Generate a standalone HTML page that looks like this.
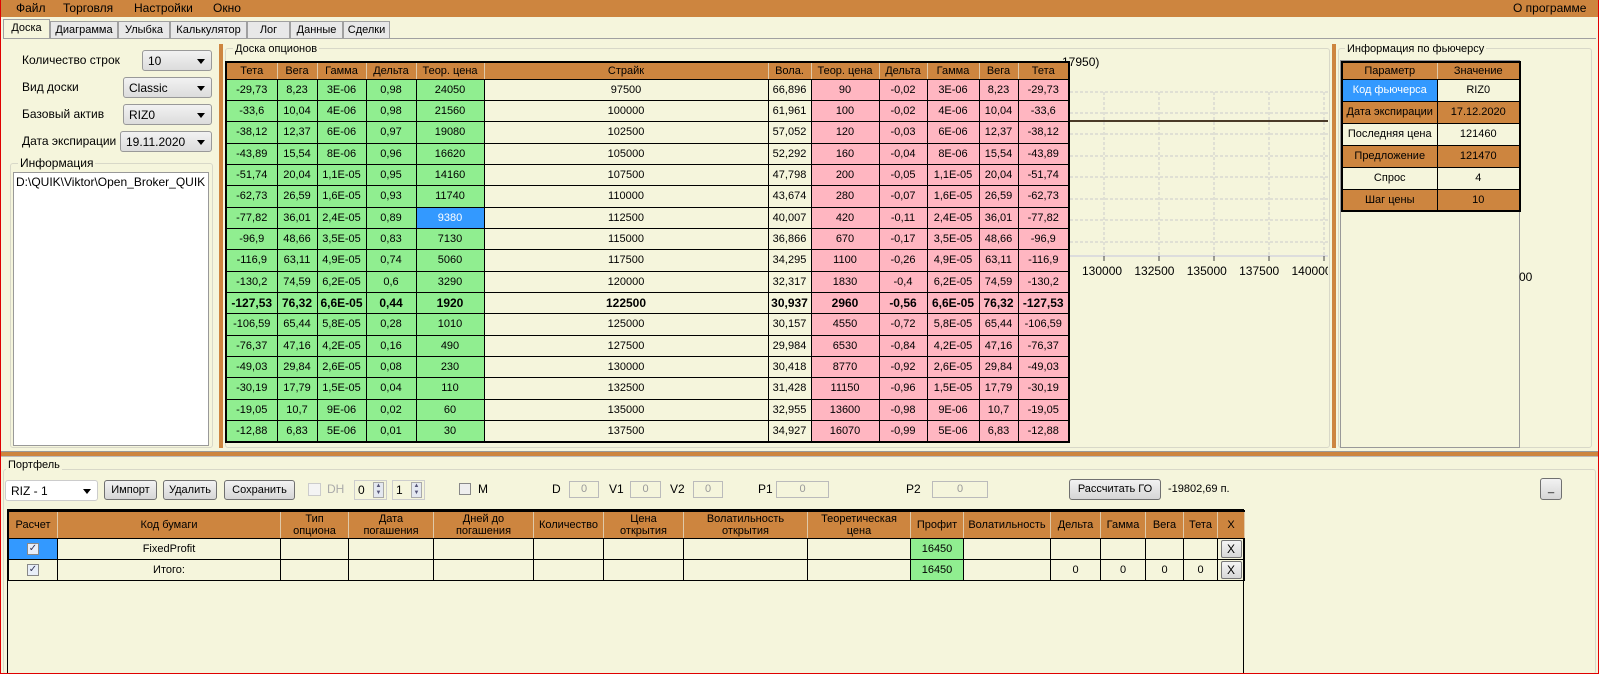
<!DOCTYPE html>
<html><head><meta charset="utf-8"><style>
*{box-sizing:border-box;margin:0;padding:0}
html,body{width:1599px;height:674px;overflow:hidden}
body{background:#F5F5DC;font-family:"Liberation Sans",sans-serif;font-size:11px;color:#000}
#root{position:relative;width:1599px;height:674px;overflow:hidden;background:#F5F5DC}
.a{position:absolute}
#frame{position:absolute;left:0;top:0;width:1599px;height:674px;border:1px solid #e00000;border-top:none;pointer-events:none;z-index:10}
#menu{left:0;top:0;width:1599px;height:17px;background:#CD853F;font-size:12px}
#menu span{position:absolute;top:1px}
.tab{position:absolute;top:21px;height:17px;background:#e8e8e8;border:1px solid #a0a0a0;border-bottom:none;font-size:11px;text-align:center;line-height:16px}
table{border-collapse:collapse;table-layout:fixed}
td,th{border:1px solid #000;text-align:center;font-weight:normal;overflow:hidden;white-space:nowrap;font-size:11px}
.ot th{background:#CD853F;height:17px;border-right:1px solid #e0c9a8}
.ot td{height:21.35px;padding:0}
.g{background:#90EE90}.p{background:#FFB6C1}.b{background:#F5F5DC}
.bold td{font-weight:bold;font-size:12px}
.grp{position:absolute;border:1px solid #d8d8c8;border-radius:3px}
.lbl{position:absolute;background:#F5F5DC;padding:0 2px;font-size:11px}
.combo{position:absolute;height:21px;border:1px solid #999;border-radius:3px;background:linear-gradient(#f2f2f2,#dcdcdc);font-size:12px;padding:3px 0 0 5px}
.combo:after{content:"";position:absolute;right:6px;top:8px;border:4px solid transparent;border-top:5px solid #000}
.btn{position:absolute;height:20px;border:1px solid #707070;border-radius:3px;background:linear-gradient(#f2f2f2,#d6d6d6);font-size:11px;text-align:center;line-height:18px}
.box{position:absolute;height:17px;border:1px solid #bbb;background:#F5F5DC;color:#999;text-align:center;font-size:11px;line-height:15px}
.pt th{background:#CD853F;font-size:11px;line-height:12px;height:27px;border-right:1px solid #e0c9a8}
.pt td{height:21px}
.cb{display:inline-block;width:12px;height:12px;border:1px solid #888;background:#e8eef8;font-size:10px;line-height:10px;color:#335}
.xb{display:inline-block;width:21px;height:18px;border:1px solid #777;border-radius:2px;background:linear-gradient(#f4f4f4,#d8d8d8);line-height:16px;font-size:12px}
</style></head><body><div id="root">
<div id="frame"></div>
<div class="a" id="menu"><span style="left:16px">Файл</span><span style="left:63px">Торговля</span><span style="left:134px">Настройки</span><span style="left:213px">Окно</span><span style="left:1513px">О программе</span></div>
<div class="tab" style="left:3px;top:19px;height:20px;width:47px;background:#F5F5DC">Доска</div>
<div class="tab" style="left:50px;width:68px">Диаграмма</div>
<div class="tab" style="left:118px;width:52px">Улыбка</div>
<div class="tab" style="left:170px;width:77px">Калькулятор</div>
<div class="tab" style="left:247px;width:43px">Лог</div>
<div class="tab" style="left:290px;width:53px">Данные</div>
<div class="tab" style="left:343px;width:47px">Сделки</div>
<div class="a" style="left:3px;top:38px;width:1593px;height:1px;background:#a0a0a0"></div>

<div class="a" style="left:22px;top:53px;font-size:12px">Количество строк</div>
<div class="combo" style="left:142px;top:50px;width:70px">10</div>
<div class="a" style="left:22px;top:80px;font-size:12px">Вид доски</div>
<div class="combo" style="left:123px;top:77px;width:89px">Classic</div>
<div class="a" style="left:22px;top:107px;font-size:12px">Базовый актив</div>
<div class="combo" style="left:123px;top:104px;width:89px">RIZ0</div>
<div class="a" style="left:22px;top:134px;font-size:12px">Дата экспирации</div>
<div class="combo" style="left:120px;top:131px;width:92px">19.11.2020</div>
<div class="grp" style="left:10px;top:163px;width:203px;height:285px"></div>
<div class="lbl" style="left:18px;top:156px;font-size:12px">Информация</div>
<div class="a" style="left:13px;top:172px;width:196px;height:274px;background:#fff;border:1px solid #999;font-size:12px;padding:2px 2px;overflow:hidden;white-space:nowrap">D:\QUIK\Viktor\Open_Broker_QUIK</div>

<div class="a" style="left:219px;top:44px;width:4px;height:404px;background:#CD853F"></div>
<div class="grp" style="left:225px;top:48px;width:1105px;height:400px"></div>
<div class="lbl" style="left:233px;top:43px">Доска опционов</div>

<div class="a" style="left:1062px;top:55px;font-size:12px">17950)</div>
<svg class="a" style="left:1070px;top:80px" width="260" height="200">
<g stroke="#ccc" stroke-dasharray="3,2" fill="none">
<line x1="0" y1="12" x2="258" y2="12"/><line x1="0" y1="33" x2="258" y2="33"/><line x1="0" y1="54" x2="258" y2="54"/><line x1="0" y1="76" x2="258" y2="76"/><line x1="0" y1="97" x2="258" y2="97"/><line x1="0" y1="119" x2="258" y2="119"/><line x1="0" y1="140" x2="258" y2="140"/><line x1="0" y1="162" x2="258" y2="162"/>
<line x1="34" y1="12" x2="34" y2="175"/><line x1="89" y1="12" x2="89" y2="175"/><line x1="144" y1="12" x2="144" y2="175"/><line x1="199" y1="12" x2="199" y2="175"/><line x1="254" y1="12" x2="254" y2="175"/>
</g>
<line x1="0" y1="41" x2="258" y2="41" stroke="#4a3a28" stroke-width="2"/>
<line x1="0" y1="176" x2="258" y2="176" stroke="#ddd" stroke-width="2"/>
<g stroke="#444"><line x1="34" y1="176" x2="34" y2="181"/><line x1="89" y1="176" x2="89" y2="181"/><line x1="144" y1="176" x2="144" y2="181"/><line x1="199" y1="176" x2="199" y2="181"/><line x1="254" y1="176" x2="254" y2="181"/></g>
</svg>
<div class="a" style="left:1082px;top:264px;font-size:12px;word-spacing:9px;white-space:nowrap;width:246px;overflow:hidden">130000 132500 135000 137500 140000</div>

<table class="ot a" style="left:225px;top:61px;width:845px;border:2px solid #000">
<colgroup><col style="width:51px"><col style="width:40px"><col style="width:49px"><col style="width:50px"><col style="width:68px"><col style="width:284px"><col style="width:43px"><col style="width:68px"><col style="width:48px"><col style="width:52px"><col style="width:39px"><col style="width:51px"></colgroup>
<tr><th>Тета</th><th>Вега</th><th>Гамма</th><th>Дельта</th><th>Теор. цена</th><th>Страйк</th><th>Вола.</th><th>Теор. цена</th><th>Дельта</th><th>Гамма</th><th>Вега</th><th>Тета</th></tr>
<tr><td class=g>-29,73</td><td class=g>8,23</td><td class=g>3E-06</td><td class=g>0,98</td><td class=g>24050</td><td class=b>97500</td><td class=b>66,896</td><td class=p>90</td><td class=p>-0,02</td><td class=p>3E-06</td><td class=p>8,23</td><td class=p>-29,73</td></tr>
<tr><td class=g>-33,6</td><td class=g>10,04</td><td class=g>4E-06</td><td class=g>0,98</td><td class=g>21560</td><td class=b>100000</td><td class=b>61,961</td><td class=p>100</td><td class=p>-0,02</td><td class=p>4E-06</td><td class=p>10,04</td><td class=p>-33,6</td></tr>
<tr><td class=g>-38,12</td><td class=g>12,37</td><td class=g>6E-06</td><td class=g>0,97</td><td class=g>19080</td><td class=b>102500</td><td class=b>57,052</td><td class=p>120</td><td class=p>-0,03</td><td class=p>6E-06</td><td class=p>12,37</td><td class=p>-38,12</td></tr>
<tr><td class=g>-43,89</td><td class=g>15,54</td><td class=g>8E-06</td><td class=g>0,96</td><td class=g>16620</td><td class=b>105000</td><td class=b>52,292</td><td class=p>160</td><td class=p>-0,04</td><td class=p>8E-06</td><td class=p>15,54</td><td class=p>-43,89</td></tr>
<tr><td class=g>-51,74</td><td class=g>20,04</td><td class=g>1,1E-05</td><td class=g>0,95</td><td class=g>14160</td><td class=b>107500</td><td class=b>47,798</td><td class=p>200</td><td class=p>-0,05</td><td class=p>1,1E-05</td><td class=p>20,04</td><td class=p>-51,74</td></tr>
<tr><td class=g>-62,73</td><td class=g>26,59</td><td class=g>1,6E-05</td><td class=g>0,93</td><td class=g>11740</td><td class=b>110000</td><td class=b>43,674</td><td class=p>280</td><td class=p>-0,07</td><td class=p>1,6E-05</td><td class=p>26,59</td><td class=p>-62,73</td></tr>
<tr><td class=g>-77,82</td><td class=g>36,01</td><td class=g>2,4E-05</td><td class=g>0,89</td><td style="background:#3399FF;color:#fff">9380</td><td class=b>112500</td><td class=b>40,007</td><td class=p>420</td><td class=p>-0,11</td><td class=p>2,4E-05</td><td class=p>36,01</td><td class=p>-77,82</td></tr>
<tr><td class=g>-96,9</td><td class=g>48,66</td><td class=g>3,5E-05</td><td class=g>0,83</td><td class=g>7130</td><td class=b>115000</td><td class=b>36,866</td><td class=p>670</td><td class=p>-0,17</td><td class=p>3,5E-05</td><td class=p>48,66</td><td class=p>-96,9</td></tr>
<tr><td class=g>-116,9</td><td class=g>63,11</td><td class=g>4,9E-05</td><td class=g>0,74</td><td class=g>5060</td><td class=b>117500</td><td class=b>34,295</td><td class=p>1100</td><td class=p>-0,26</td><td class=p>4,9E-05</td><td class=p>63,11</td><td class=p>-116,9</td></tr>
<tr><td class=g>-130,2</td><td class=g>74,59</td><td class=g>6,2E-05</td><td class=g>0,6</td><td class=g>3290</td><td class=b>120000</td><td class=b>32,317</td><td class=p>1830</td><td class=p>-0,4</td><td class=p>6,2E-05</td><td class=p>74,59</td><td class=p>-130,2</td></tr>
<tr class=bold><td class=g>-127,53</td><td class=g>76,32</td><td class=g>6,6E-05</td><td class=g>0,44</td><td class=g>1920</td><td class=b>122500</td><td class=b>30,937</td><td class=p>2960</td><td class=p>-0,56</td><td class=p>6,6E-05</td><td class=p>76,32</td><td class=p>-127,53</td></tr>
<tr><td class=g>-106,59</td><td class=g>65,44</td><td class=g>5,8E-05</td><td class=g>0,28</td><td class=g>1010</td><td class=b>125000</td><td class=b>30,157</td><td class=p>4550</td><td class=p>-0,72</td><td class=p>5,8E-05</td><td class=p>65,44</td><td class=p>-106,59</td></tr>
<tr><td class=g>-76,37</td><td class=g>47,16</td><td class=g>4,2E-05</td><td class=g>0,16</td><td class=g>490</td><td class=b>127500</td><td class=b>29,984</td><td class=p>6530</td><td class=p>-0,84</td><td class=p>4,2E-05</td><td class=p>47,16</td><td class=p>-76,37</td></tr>
<tr><td class=g>-49,03</td><td class=g>29,84</td><td class=g>2,6E-05</td><td class=g>0,08</td><td class=g>230</td><td class=b>130000</td><td class=b>30,418</td><td class=p>8770</td><td class=p>-0,92</td><td class=p>2,6E-05</td><td class=p>29,84</td><td class=p>-49,03</td></tr>
<tr><td class=g>-30,19</td><td class=g>17,79</td><td class=g>1,5E-05</td><td class=g>0,04</td><td class=g>110</td><td class=b>132500</td><td class=b>31,428</td><td class=p>11150</td><td class=p>-0,96</td><td class=p>1,5E-05</td><td class=p>17,79</td><td class=p>-30,19</td></tr>
<tr><td class=g>-19,05</td><td class=g>10,7</td><td class=g>9E-06</td><td class=g>0,02</td><td class=g>60</td><td class=b>135000</td><td class=b>32,955</td><td class=p>13600</td><td class=p>-0,98</td><td class=p>9E-06</td><td class=p>10,7</td><td class=p>-19,05</td></tr>
<tr><td class=g>-12,88</td><td class=g>6,83</td><td class=g>5E-06</td><td class=g>0,01</td><td class=g>30</td><td class=b>137500</td><td class=b>34,927</td><td class=p>16070</td><td class=p>-0,99</td><td class=p>5E-06</td><td class=p>6,83</td><td class=p>-12,88</td></tr>
</table>

<div class="a" style="left:1332px;top:44px;width:4px;height:404px;background:#CD853F"></div>
<div class="grp" style="left:1338px;top:48px;width:254px;height:400px"></div>
<div class="lbl" style="left:1345px;top:43px">Информация по фьючерсу</div>
<div class="a" style="left:1340px;top:60px;width:180px;height:388px;background:#F5F5DC;border:1px solid #999"></div>
<div class="a" style="left:1519px;top:270px;font-size:12px">00</div>
<table class="ot a" style="left:1341px;top:61px;width:178px;border:2px solid #000">
<colgroup><col style="width:95px"><col style="width:83px"></colgroup>
<tr><th>Параметр</th><th>Значение</th></tr>
<tr><td style="background:#3399FF;color:#fff;height:22px">Код фьючерса</td><td class=b>RIZ0</td></tr>
<tr><td style="background:#CD853F;height:22px">Дата экспирации</td><td style="background:#CD853F">17.12.2020</td></tr>
<tr><td class=b style="height:22px">Последняя цена</td><td class=b>121460</td></tr>
<tr><td style="background:#CD853F;height:22px">Предложение</td><td style="background:#CD853F">121470</td></tr>
<tr><td class=b style="height:22px">Спрос</td><td class=b>4</td></tr>
<tr><td style="background:#CD853F;height:22px">Шаг цены</td><td style="background:#CD853F">10</td></tr>
</table>

<div class="a" style="left:0;top:451px;width:1599px;height:1px;background:#999"></div>
<div class="a" style="left:0;top:452px;width:1599px;height:4px;background:#CD853F"></div>
<div class="a" style="left:0;top:456px;width:1599px;height:1px;background:#bbb"></div>

<div class="grp" style="left:3px;top:469px;width:1593px;height:205px;border-bottom:none"></div>
<div class="lbl" style="left:6px;top:459px">Портфель</div>
<div class="combo" style="left:5px;top:480px;width:93px;height:21px;background:#fff;border-color:#ccc;font-size:12px">RIZ - 1</div>
<div class="btn" style="left:104px;top:480px;width:53px">Импорт</div>
<div class="btn" style="left:163px;top:480px;width:54px">Удалить</div>
<div class="btn" style="left:224px;top:480px;width:71px">Сохранить</div>
<div class="a" style="left:308px;top:483px;width:13px;height:13px;border:1px solid #ccc;background:#f4f4f4"></div>
<div class="a" style="left:327px;top:482px;color:#aaa;font-size:12px">DH</div>
<div class="a" style="left:354px;top:480px;width:33px;height:20px;border:1px solid #ccc;background:#F5F5DC;font-size:12px;padding:2px 3px">0</div>
<div class="a" style="left:373px;top:482px;width:11px;height:16px;border:1px solid #aaa;background:#e4e8f0;font-size:6px;line-height:7px;text-align:center;color:#557">▲<br>▼</div>
<div class="a" style="left:392px;top:480px;width:33px;height:20px;border:1px solid #ccc;background:#F5F5DC;font-size:12px;padding:2px 3px">1</div>
<div class="a" style="left:411px;top:482px;width:11px;height:16px;border:1px solid #aaa;background:#e4e8f0;font-size:6px;line-height:7px;text-align:center;color:#557">▲<br>▼</div>
<div class="a" style="left:459px;top:483px;width:12px;height:12px;border:1px solid #888;background:#eee"></div>
<div class="a" style="left:478px;top:482px;font-size:12px">M</div>
<div class="a" style="left:552px;top:482px;font-size:12px">D</div>
<div class="box" style="left:569px;top:481px;width:30px">0</div>
<div class="a" style="left:609px;top:482px;font-size:12px">V1</div>
<div class="box" style="left:630px;top:481px;width:31px">0</div>
<div class="a" style="left:670px;top:482px;font-size:12px">V2</div>
<div class="box" style="left:693px;top:481px;width:30px">0</div>
<div class="a" style="left:758px;top:482px;font-size:12px">P1</div>
<div class="box" style="left:776px;top:481px;width:53px">0</div>
<div class="a" style="left:906px;top:482px;font-size:12px">P2</div>
<div class="box" style="left:932px;top:481px;width:56px">0</div>
<div class="btn" style="left:1069px;top:479px;width:92px;height:21px;border-radius:3px">Рассчитать ГО</div>
<div class="a" style="left:1168px;top:483px;font-size:11px">-19802,69 п.</div>
<div class="btn" style="left:1540px;top:478px;width:22px;height:22px">_</div>

<div class="a" style="left:7px;top:509px;width:1237px;height:165px;border:1px solid #000;border-bottom:none"></div>
<table class="pt a" style="left:8px;top:510px;width:1236px;border-top:2px solid #000">
<colgroup><col style="width:49px"><col style="width:223px"><col style="width:68px"><col style="width:85px"><col style="width:100px"><col style="width:70px"><col style="width:80px"><col style="width:124px"><col style="width:103px"><col style="width:53px"><col style="width:87px"><col style="width:50px"><col style="width:45px"><col style="width:38px"><col style="width:34px"><col style="width:27px"></colgroup>
<tr><th>Расчет</th><th>Код бумаги</th><th>Тип<br>опциона</th><th>Дата<br>погашения</th><th>Дней до<br>погашения</th><th>Количество</th><th>Цена<br>открытия</th><th>Волатильность<br>открытия</th><th>Теоретическая<br>цена</th><th>Профит</th><th>Волатильность</th><th>Дельта</th><th>Гамма</th><th>Вега</th><th>Тета</th><th>X</th></tr>
<tr><td style="background:#3399FF"><span class="cb">✓</span></td><td>FixedProfit</td><td></td><td></td><td></td><td></td><td></td><td></td><td></td><td class=g>16450</td><td></td><td></td><td></td><td></td><td></td><td style="padding:0"><span class="xb">X</span></td></tr>
<tr><td><span class="cb">✓</span></td><td>Итого:</td><td></td><td></td><td></td><td></td><td></td><td></td><td></td><td class=g>16450</td><td></td><td>0</td><td>0</td><td>0</td><td>0</td><td style="padding:0"><span class="xb">X</span></td></tr>
</table>
</div></body></html>
